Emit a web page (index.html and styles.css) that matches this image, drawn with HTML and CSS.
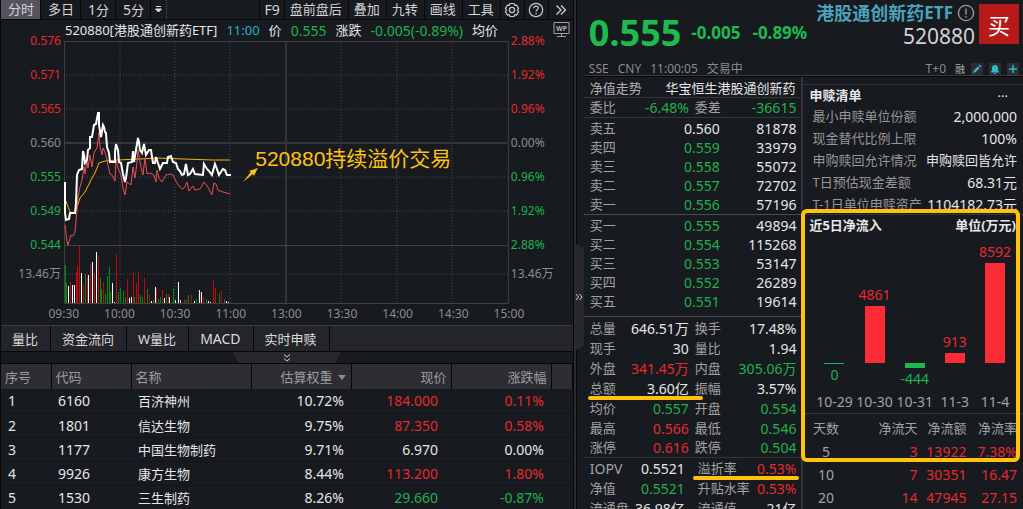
FILE: index.html
```html
<!DOCTYPE html>
<html lang="zh-CN">
<head>
    <meta charset="UTF-8">
    <meta name="viewport" content="width=device-width, initial-scale=1.0">
    <title>520880 港股通创新药ETF</title>
    <link rel="stylesheet" href="styles.css">
</head>
<body>
<div class="terminal">
    <main class="left">
        <nav class="toolbar">
            <button class="tool period active">分时</button>
            <button class="tool period">多日</button>
            <button class="tool period"><span class="num">1</span>分</button>
            <button class="tool period"><span class="num">5</span>分</button>
            <button class="tool-more" aria-label="更多周期">
                <svg width="7" height="7" viewBox="0 0 7 7"><path d="M1 0.500H6M0.500 3H6.500L3.500 6Z" fill="#ddd" stroke="#ddd" stroke-width="1"/></svg>
            </button>
            <span class="spacer"></span>
            <button class="tool f9">F9</button>
            <button class="tool">盘前盘后</button>
            <button class="tool">叠加</button>
            <button class="tool">九转</button>
            <button class="tool">画线</button>
            <button class="tool">工具</button>
            <button class="tool icon" aria-label="设置">
                <svg width="16" height="16" viewBox="0 0 16 16" fill="none" stroke="#c8c8c8" stroke-width="1.2" stroke-linejoin="round">
                    <path d="M6 1.500h4l.7 1.800 1.900-.2 2 3.300L13.400 8l1.200 1.600-2 3.300-1.900-.2L10 14.500H6l-.7-1.800-1.900.2-2-3.300L2.600 8 1.400 6.400l2-3.300 1.900.2Z"/>
                    <circle cx="8" cy="8" r="2.600"/>
                </svg>
            </button>
            <button class="tool icon" aria-label="帮助">
                <svg width="16" height="16" viewBox="0 0 16 16" fill="none" stroke="#c8c8c8" stroke-width="1.200">
                    <circle cx="8" cy="8" r="6.700"/>
                    <path d="M5.800 6.300c0-3 4.500-2.900 4.500-.2 0 1.700-2.200 1.700-2.200 3.500M8.100 10.800v1.400"/>
                </svg>
            </button>
            <button class="tool icon" aria-label="展开">
                <svg width="12" height="12" viewBox="0 0 12 12" fill="none" stroke="#d0d0d0" stroke-width="1.300"><path d="M1.500 1.500 6 6 1.500 10.500M6 1.500 10.500 6 6 10.500"/></svg>
            </button>
        </nav>

        <div class="quote-line">
            <span class="cn">520880[港股通创新药ETF]</span>
            <span class="cn cyan">11:00</span>
            <span class="cn">价</span>
            <span class="down">0.555</span>
            <span class="cn">涨跌</span>
            <span class="down">-0.005(-0.89%)</span>
            <span class="cn">均价</span>
            <svg class="wp" width="17" height="17" viewBox="0 0 17 17">
                <path d="M1 1.500H16V12.500H1ZM8.500 12.500V15M4 15.500H13" fill="none" stroke="#a0a0a0"/>
                <text x="8.500" y="10" text-anchor="middle">WP</text>
            </svg>
        </div>

        <section class="chart">
            <div class="axis axis-left">
                <span class="up">0.576</span>
                <span class="up">0.571</span>
                <span class="up">0.565</span>
                <span>0.560</span>
                <span class="down">0.555</span>
                <span class="down">0.549</span>
                <span class="down">0.544</span>
                <span class="vol">13.46万</span>
            </div>
            <div class="plot">
                <svg viewBox="64 41 445 263" preserveAspectRatio="none">
                    <g class="grid-dots">
                        <path d="M66 75H508M66 109H508M66 177H508M66 211H508M66 274H508"/>
                        <path d="M120 43V303M175 43V303M230 43V303M341 43V303M397 43V303M452 43V303"/>
                    </g>
                    <path class="grid-main" d="M64 143H508M286 41V303"/>
                    <path class="grid-frame" d="M64.500 41.500H508.500V303.500H64.500ZM64 245.500H508"/>
                    <g class="volume" transform="translate(0.5 0)">
                        <path class="v-green" d="M65 303V265M66 303V283M85 303V274M100 303V278M101 303V289M105 303V294M107 303V276M109 303V267M110 303V292M118 303V292M120 303V288M123 303V291M125 303V297M134 303V297M140 303V295M142 303V297M147 303V289M153 303V300M158 303V299M160 303V297M166 303V294M172 303V302M173 303V288M186 303V300M188 303V295M196 303V299M206 303V299M219 303V293M224 303V299"/>
                        <path class="v-red" d="M70 303V282M76 303V272M77 303V266M79 303V246M83 303V285M87 303V277M90 303V264M94 303V273M98 303V257M103 303V282M116 303V254M127 303V279M133 303V273M136 303V283M138 303V272M144 303V278M149 303V295M156 303V289M162 303V290M168 303V294M184 303V299M191 303V295M203 303V297M213 303V280M215 303V288M221 303V291"/>
                        <path class="v-white" d="M68 303V286M72 303V285M74 303V285M81 303V273M88 303V275M92 303V262M96 303V252M112 303V283M114 303V302M129 303V298M131 303V297M151 303V301M155 303V287M164 303V298M169 303V297M175 303V300M178 303V282M180 303V300M194 303V301M199 303V290M201 303V292M208 303V301M210 303V302M226 303V301M228 303V302"/>
                    </g>
                    <polyline class="l-yellow" points="66,201 68,207 71,213 75,213 77,207 80,198 85,192 92,178 95,173 99,163 105,161 117,160 140,159 157,158 183,159 213,160 230,160"/>
                    <polyline class="l-red" points="65,225 66,233 67,242 68,245 71,235 73,236 75,232 77,210 78,197 80,187 82,180 84,167 85,174 87,160 88,168 90,155 92,167 94,153 97,148 99,132 100,147 102,155 103,148 106,155 107,160 110,174 112,175 115,181 116,159 118,168 121,175 123,188 125,195 127,182 131,185 133,167 135,178 137,163 138,150 141,167 143,175 145,158 147,174 150,173 154,175 156,182 157,170 159,178 162,182 166,175 170,174 173,175 177,183 180,187 183,189 185,187 187,182 189,191 193,186 195,190 200,189 204,182 208,187 212,195 214,183 216,184 218,190 223,192 227,193 230,194"/>
                    <polyline class="l-white" points="65,182 65,213 66,220 69,219 70,213 75,213 76,203 77,175 79,170 82,169 83,151 84,155 85,163 87,160 88,150 90,148 90,137 92,137 94,125 96,124 98,113 99,113 99,125 101,137 103,125 104,127 105,132 106,133 107,147 109,153 110,162 115,162 115,152 116,144 118,150 119,162 121,163 123,174 125,182 126,178 128,163 132,162 133,151 134,162 136,150 138,138 139,142 140,150 142,153 144,144 146,155 149,150 151,150 153,163 155,163 156,157 158,163 160,169 163,163 167,163 168,157 171,156 173,162 176,163 178,169 180,171 182,175 184,174 186,164 188,175 190,174 193,169 195,174 203,175 204,164 207,169 209,171 212,175 215,164 217,169 219,175 223,169 225,170 227,175 231,175"/>
                    <path class="arrow" d="M243 182 251 172 249 171 258 168 254 176 253 174Z"/>
                </svg>
                <p class="note">520880持续溢价交易</p>
            </div>
            <div class="axis axis-right">
                <span class="up">2.88%</span>
                <span class="up">1.92%</span>
                <span class="up">0.96%</span>
                <span>0.00%</span>
                <span class="down">0.96%</span>
                <span class="down">1.92%</span>
                <span class="down">2.88%</span>
                <span class="vol">13.46万</span>
            </div>
            <div class="times">
                <span>09:30</span><span>10:00</span><span>10:30</span><span>11:00</span><span>13:00</span><span>13:30</span><span>14:00</span><span>14:30</span><span>15:00</span>
            </div>
        </section>

        <nav class="tabs">
            <button>量比</button>
            <button>资金流向</button>
            <button>W量比</button>
            <button class="latin">MACD</button>
            <button>实时申赎</button>
        </nav>
        <div class="fold">
            <button aria-label="收起">
                <svg width="8" height="8" viewBox="0 0 8 8" fill="none" stroke="#ccc"><path d="M1 .5 4 3 7 .5M1 4.500 4 7 7 4.500"/></svg>
            </button>
        </div>

        <table class="holdings">
            <colgroup><col class="c-no"><col class="c-code"><col class="c-name"><col class="c-val"><col class="c-val"><col class="c-val"><col></colgroup>
            <thead>
                <tr><th>序号</th><th>代码</th><th>名称</th><th class="r">估算权重<i class="sort"></i></th><th class="r">现价</th><th class="r">涨跌幅</th><th></th></tr>
            </thead>
            <tbody>
                <tr><td>1</td><td>6160</td><td class="cn">百济神州</td><td class="r">10.72%</td><td class="r price up">184.000</td><td class="r up">0.11%</td><td></td></tr>
                <tr><td>2</td><td>1801</td><td class="cn">信达生物</td><td class="r">9.75%</td><td class="r price up">87.350</td><td class="r up">0.58%</td><td></td></tr>
                <tr><td>3</td><td>1177</td><td class="cn">中国生物制药</td><td class="r">9.71%</td><td class="r price">6.970</td><td class="r">0.00%</td><td></td></tr>
                <tr><td>4</td><td>9926</td><td class="cn">康方生物</td><td class="r">8.44%</td><td class="r price up">113.200</td><td class="r up">1.80%</td><td></td></tr>
                <tr><td>5</td><td>1530</td><td class="cn">三生制药</td><td class="r">8.26%</td><td class="r price down">29.660</td><td class="r down">-0.87%</td><td></td></tr>
            </tbody>
        </table>
    </main>

    <div class="gutter">
        <button class="handle" aria-label="收起右侧">
            <svg width="8" height="8" viewBox="0 0 8 8" fill="none" stroke="#ccc"><path d="M1 1 3.500 4 1 7M4.500 1 7 4 4.500 7"/></svg>
        </button>
    </div>

    <aside class="right">
        <header class="head">
            <div class="head-main">
                <strong class="last">0.555</strong>
                <strong class="chg">-0.005</strong>
                <strong class="chg">-0.89%</strong>
                <div class="name">
                    <h1>港股通创新药<span>ETF</span>
                        <svg width="18" height="18" viewBox="0 0 18 18" fill="none" stroke="#999" stroke-width="1.400"><circle cx="9" cy="9" r="7.600"/><path d="M9 4.500V10.500M9 12V13.500"/></svg>
                    </h1>
                    <p>520880</p>
                </div>
                <button class="buy">买</button>
            </div>
            <div class="head-sub">
                <span>SSE</span><span>CNY</span><span>11:00:05</span><span>交易中</span>
                <span class="t0">T+0</span><span class="rong">融</span>
                <button aria-label="编辑"><svg width="12" height="12" viewBox="0 0 12 12"><path d="M2 10 2.800 7.500 7 3.300 8.700 5 4.500 9.200ZM7.700 2.600 8.700 1.600 10.400 3.300 9.400 4.300Z" fill="#35b5cc"/></svg></button>
                <button aria-label="提醒"><svg width="12" height="12" viewBox="0 0 12 12"><path d="M2 9.500V8.500L3 7.500V5C3 1 9 1 9 5V7.500L10 8.500V9.500ZM5 10H7V11H5Z" fill="#35b5cc"/></svg></button>
                <button aria-label="添加"><svg width="12" height="12" viewBox="0 0 12 12"><path d="M6 2V10M2 6H10" stroke="#35b5cc" stroke-width="1.500"/></svg></button>
            </div>
        </header>

        <div class="panels">
            <section class="book">
                <div class="nav-row"><a href="#">净值走势</a><span>华宝恒生港股通创新药</span></div>
                <table class="stats ratio">
                    <colgroup><col class="s1"><col class="s2"><col class="s3"><col></colgroup>
                    <tr><th>委比</th><td class="down">-6.48%</td><th>委差</th><td class="down">-36615</td></tr>
                </table>
                <table class="levels asks">
                    <colgroup><col class="l1"><col class="l2"><col></colgroup>
                    <tr><th>卖五</th><td>0.560</td><td>81878</td></tr>
                    <tr><th>卖四</th><td class="down">0.559</td><td>33979</td></tr>
                    <tr><th>卖三</th><td class="down">0.558</td><td>55072</td></tr>
                    <tr><th>卖二</th><td class="down">0.557</td><td>72702</td></tr>
                    <tr><th>卖一</th><td class="down">0.556</td><td>57196</td></tr>
                </table>
                <table class="levels bids">
                    <colgroup><col class="l1"><col class="l2"><col></colgroup>
                    <tr><th>买一</th><td class="down">0.555</td><td>49894</td></tr>
                    <tr><th>买二</th><td class="down">0.554</td><td>115268</td></tr>
                    <tr><th>买三</th><td class="down">0.553</td><td>53147</td></tr>
                    <tr><th>买四</th><td class="down">0.552</td><td>26289</td></tr>
                    <tr><th>买五</th><td class="down">0.551</td><td>19614</td></tr>
                </table>
                <table class="stats day">
                    <colgroup><col class="s1"><col class="s2"><col class="s3"><col></colgroup>
                    <tr><th>总量</th><td>646.51万</td><th>换手</th><td>17.48%</td></tr>
                    <tr><th>现手</th><td>30</td><th>量比</th><td>1.94</td></tr>
                    <tr><th>外盘</th><td class="up">341.45万</td><th>内盘</th><td class="down">305.06万</td></tr>
                    <tr><th class="marked">总额</th><td>3.60亿</td><th>振幅</th><td>3.57%</td></tr>
                    <tr><th>均价</th><td class="down">0.557</td><th>开盘</th><td class="down">0.554</td></tr>
                    <tr><th>最高</th><td class="up">0.566</td><th>最低</th><td class="down">0.546</td></tr>
                    <tr><th>涨停</th><td class="up">0.616</td><th>跌停</th><td class="down">0.504</td></tr>
                </table>
                <table class="stats fund">
                    <colgroup><col class="s1"><col class="s2"><col class="s3"><col></colgroup>
                    <tr><th class="latin">IOPV</th><td>0.5521</td><th class="marked">溢折率</th><td class="up">0.53%</td></tr>
                    <tr><th>净值</th><td class="down">0.5521</td><th>升贴水率</th><td class="up">0.53%</td></tr>
                    <tr><th>流通盘</th><td>36.98亿</td><th>流通值</th><td>21亿</td></tr>
                </table>
            </section>

            <section class="side">
                <div class="side-title"><h2>申赎清单</h2><button aria-label="更多">···</button></div>
                <dl class="list">
                    <div><dt>最小申赎单位份额</dt><dd>2,000,000</dd></div>
                    <div><dt>现金替代比例上限</dt><dd>100%</dd></div>
                    <div><dt>申购赎回允许情况</dt><dd class="cn">申购赎回皆允许</dd></div>
                    <div><dt>T日预估现金差额</dt><dd>68.31元</dd></div>
                    <div><dt>T-1日单位申赎资产</dt><dd>1104182.73元</dd></div>
                </dl>
                <div class="inflow">
                    <div class="inflow-title"><h2>近5日净流入</h2><b>单位(万元)</b></div>
                    <div class="bars">
                        <div class="bar-col neg"><i style="height: 1px"></i><span>0</span><time>10-29</time></div>
                        <div class="bar-col"><span>4861</span><i style="height: 57px"></i><time>10-30</time></div>
                        <div class="bar-col neg"><i style="height: 5px"></i><span>-444</span><time>10-31</time></div>
                        <div class="bar-col"><span>913</span><i style="height: 10px"></i><time>11-3</time></div>
                        <div class="bar-col"><span>8592</span><i style="height: 100px"></i><time>11-4</time></div>
                    </div>
                    <table class="flow">
                        <colgroup><col class="f1"><col class="f2"><col class="f3"><col></colgroup>
                        <tr><th>天数</th><th>净流天</th><th>净流额</th><th>净流率</th></tr>
                        <tr><td>5</td><td>3</td><td>13922</td><td>7.38%</td></tr>
                        <tr><td>10</td><td>7</td><td>30351</td><td>16.47</td></tr>
                        <tr><td>20</td><td>14</td><td>47945</td><td>27.15</td></tr>
                    </table>
                </div>
            </section>
        </div>
    </aside>
</div>
</body>
</html>
```
FILE: styles.css
```css
*, *::before, *::after {
    box-sizing: border-box;
}

body {
    margin: 0;
    background-color: #171a1f;
    color: #e6e6e6;
    font-family: "Noto Sans", "Noto Sans CJK SC", sans-serif;
    font-size: 14px;
    overflow: hidden;
}

h1, h2, p, dl, dd {
    margin: 0;
}

button {
    margin: 0;
    padding: 0;
    border: none;
    background: none;
    color: inherit;
    font-family: inherit;
    font-size: 13px;
    cursor: pointer;
}

svg {
    display: block;
}

table {
    width: 100%;
    border-collapse: collapse;
    table-layout: fixed;
    white-space: nowrap;
}

th, td {
    padding: 0;
    font-weight: normal;
    text-align: left;
}

.up {
    color: #e8282e;
}

.down {
    color: #1fb14c;
}

.cyan {
    color: #22b5cc;
}

.cn {
    font-size: 13px;
}

.num, .latin {
    font-size: 14px;
}

.terminal {
    display: grid;
    grid-template-columns: 30fr 11px 23fr;
    height: 100vh;
    overflow: hidden;
}

.left {
    min-width: 0;
    border-left: 1px solid #08090b;
}

/* toolbar */
.toolbar {
    display: flex;
    height: 20px;
    border-bottom: 1px solid #08090b;
}

.tool {
    padding: 0 6px 0 5px;
    border-right: 1px solid #08090b;
    line-height: 19px;
    color: #d4d4d4;
}

.tool.period {
    padding: 0 6px 0 7px;
}

.tool.active {
    background-color: #55535f;
}

.tool.f9 {
    padding: 0 4px;
    border-left: 1px solid #08090b;
    font-size: 14px;
}

.tool.icon {
    display: flex;
    align-items: center;
    justify-content: center;
    width: 24px;
    padding: 0;
}

.tool.icon:last-child {
    border-right: none;
}

.tool-more {
    display: flex;
    align-items: center;
    padding: 0 4px;
    border-right: 1px dotted #55575c;
}

.spacer {
    flex: 1;
}

.quote-line {
    display: flex;
    gap: 9px;
    height: 21px;
    padding: 0 3px 0 64px;
    line-height: 21px;
    white-space: nowrap;
}

.wp {
    margin: 1px 0 0 auto;
}

.wp text {
    fill: #b0b0b0;
    font-size: 7px;
    font-weight: bold;
}

/* intraday chart */
.chart {
    display: grid;
    grid-template-columns: 63px 1fr 64px;
    grid-template-rows: 263px 21px;
    color: #8d8d8d;
    font-size: 12px;
}

.axis {
    display: flex;
    flex-direction: column;
    margin-top: -17px;
}

.axis span {
    height: 34px;
    line-height: 34px;
}

.axis .vol {
    height: 24px;
    line-height: 24px;
}

.axis-left {
    padding-right: 3px;
    text-align: right;
}

.axis-right {
    padding-left: 2px;
}

.plot {
    position: relative;
}

.plot svg {
    width: 100%;
    height: 263px;
}

.grid-dots {
    stroke: #4a4b50;
    stroke-dasharray: 1 2;
    shape-rendering: crispEdges;
}

.grid-main {
    stroke: #36363a;
    stroke-width: 2;
}

.grid-frame {
    fill: none;
    stroke: #414145;
}

.volume {
    stroke-width: 1;
    shape-rendering: crispEdges;
}

.v-green {
    stroke: #0a8a14;
}

.v-red {
    stroke: #c80a0a;
}

.v-white {
    stroke: #fff;
}

.l-white, .l-red, .l-yellow {
    fill: none;
}

.l-white {
    stroke: #fff;
    stroke-width: 2;
}

.l-red {
    stroke: #e85050;
}

.l-yellow {
    stroke: #f5b40c;
}

.arrow {
    fill: #ffc20e;
}

.note {
    position: absolute;
    left: 43%;
    top: 104px;
    color: #ffc20e;
    font-family: "Liberation Sans", "Noto Sans CJK SC", sans-serif;
    font-size: 21px;
    line-height: 28px;
    white-space: nowrap;
}

.times {
    grid-column: 2;
    display: flex;
    margin: 0 -28px;
    line-height: 19px;
}

.times span {
    flex: 1;
    text-align: center;
}

/* indicator tabs */
.tabs {
    display: flex;
    height: 27px;
    border-top: 1px solid #3c3c40;
    border-bottom: 1px solid #050607;
    background-color: #24242b;
}

.tabs button {
    padding: 0 12px 0 11px;
    border-right: 1px solid #050607;
    color: #dcdcdc;
}

.fold {
    display: flex;
    justify-content: center;
    height: 12px;
    border-bottom: 1px solid #050607;
}

.fold button {
    display: flex;
    align-items: center;
    justify-content: center;
    width: 108px;
    background-color: #28272e;
    clip-path: polygon(0 0, 100% 0, 95% 100%, 5% 100%);
}

/* holdings */
.holdings th {
    height: 25px;
    padding: 0 4px;
    border-right: 1px solid #050607;
    background-color: #2e2d33;
    color: #9c9c9c;
    font-size: 13px;
}

.holdings td {
    height: 24px;
    padding: 0 7px;
    border-bottom: 1px solid #121417;
}

.holdings .r {
    text-align: right;
}

.holdings .price {
    padding-right: 13px;
}

.c-no {
    width: 50px;
}

.c-code {
    width: 80px;
}

.c-name {
    width: 120px;
}

.c-val {
    width: 100px;
}

.sort {
    display: inline-block;
    margin: 0 1px 2px 5px;
    border: 4px solid transparent;
    border-top: 5px solid #8d8d8d;
    border-bottom: none;
}

/* divider between the two halves */
.gutter {
    display: flex;
    align-items: center;
    border-left: 1px solid #050607;
    box-shadow: inset 2px 0 #2c2b31, inset 3px 0 #050607;
    padding-left: 1px;
}

.handle {
    display: flex;
    align-items: center;
    justify-content: center;
    width: 9px;
    height: 108px;
    margin-top: 76px;
    background-color: #29282f;
    clip-path: polygon(0 0, 100% 5%, 100% 95%, 0 100%);
}

/* quote header */
.right {
    min-width: 0;
}

.head {
    height: 77px;
    border-bottom: 1px solid #050607;
    box-shadow: inset 0 -1px #3c3c40;
}

.head-main {
    display: flex;
    height: 60px;
    padding: 3px 4px 0 5px;
}

.last {
    color: #1dba50;
    font-size: 36px;
    line-height: 60px;
}

.chg {
    margin-left: 10px;
    color: #1dba50;
    font-size: 17px;
    line-height: 60px;
}

.chg + .chg {
    margin-left: 12px;
}

.name {
    margin-left: auto;
    text-align: right;
}

.name h1 {
    display: flex;
    align-items: center;
    color: #4aa3bb;
    font-size: 18px;
    line-height: 20px;
    white-space: nowrap;
}

.name h1 span {
    font-size: 17px;
}

.name h1 svg {
    margin-left: 4px;
}

.name p {
    color: #d2d2d2;
    font-size: 21px;
    line-height: 26px;
}

.buy {
    width: 40px;
    height: 40px;
    margin: 1px 0 0 4px;
    background-color: #b81a1c;
    color: #fff;
    font-size: 22px;
}

.head-sub {
    display: flex;
    align-items: center;
    gap: 9px;
    height: 16px;
    padding: 2px 4px 0 5px;
    color: #8c8c8c;
    font-size: 12px;
    line-height: 16px;
}

.t0 {
    margin-left: auto;
}

.rong {
    margin-right: -3px;
    color: #aaa;
    font-size: 10px;
}

.head-sub button {
    width: 12px;
    height: 12px;
    background-color: #2a2e35;
}

.head-sub button + button {
    margin-left: -3px;
}

.panels {
    display: grid;
    grid-template-columns: 1fr 1fr;
}

/* order book */
.book {
    min-width: 0;
    border-right: 2px solid #34333a;
}

.nav-row {
    display: flex;
    justify-content: space-between;
    height: 21px;
    padding: 0 6px;
    border-bottom: 1px solid #34363a;
    font-size: 13px;
    line-height: 22px;
    white-space: nowrap;
}

.nav-row a {
    color: #b0b0b0;
    text-decoration: none;
}

.book th {
    padding-left: 6px;
    color: #a2a2a2;
    font-size: 13px;
}

.book .latin {
    font-size: 14px;
}

.book td {
    text-align: right;
}

.levels tr {
    height: 19px;
    line-height: 19px;
}

.levels td:last-child, .stats td:last-child {
    padding-right: 5px;
}

.levels {
    border-collapse: separate;
    border-spacing: 0;
    border-bottom: 1px solid #4a4c50;
}

.asks {
    padding-top: 1px;
}

.bids {
    padding: 1px 0 5px;
}

.l1 {
    width: 60px;
}

.l2 {
    width: 76px;
}

.stats {
    border-collapse: separate;
    border-spacing: 0;
}

.stats tr {
    height: 20px;
    line-height: 19px;
}

.s1 {
    width: 44px;
}

.s2 {
    width: 61px;
}

.s3 {
    width: 48px;
}

.ratio td, .ratio th, .day tr:last-child > * {
    border-bottom: 1px solid #34363a;
}

.day {
    padding-top: 1px;
}

.fund td:nth-child(2) {
    padding-right: 4px;
}

.fund th:nth-child(3) {
    padding-left: 9px;
}

.marked {
    position: relative;
}

.marked::after {
    content: "";
    position: absolute;
    left: 4px;
    bottom: -2px;
    width: 115px;
    height: 4px;
    border-radius: 2px;
    background-color: #ffc20e;
}

.fund .marked::after {
    width: 106px;
}

/* creation / redemption list */
.side {
    min-width: 0;
    padding-top: 7px;
}

.side h2, .inflow-title b {
    color: #e8e8e8;
    font-size: 13px;
    font-weight: bold;
}

.side-title {
    display: flex;
    justify-content: space-between;
    height: 22px;
    padding: 0 15px 0 6px;
    border-top: 1px solid #34363a;
    line-height: 21px;
}

.list div {
    display: flex;
    justify-content: space-between;
    height: 22px;
    padding: 0 6px 0 9px;
    line-height: 21px;
    white-space: nowrap;
}

.list div:last-child {
    height: 20px;
}

.list dt {
    color: #969696;
    font-size: 13px;
}

/* five day inflow */
.inflow {
    position: relative;
    border-top: 1px solid #34363a;
}

.inflow::after {
    content: "";
    position: absolute;
    top: -6px;
    left: -2px;
    right: 3px;
    height: 253px;
    border: 4px solid #ffc20e;
    border-radius: 6px;
}

.inflow-title {
    display: flex;
    justify-content: space-between;
    padding: 0 7px 0 6px;
    line-height: 20px;
}

.bars {
    display: flex;
    height: 179px;
    padding: 0 8px 0 11px;
    border-bottom: 1px solid #34363a;
}

.bar-col {
    flex: 1;
    display: flex;
    flex-direction: column;
    align-items: center;
    justify-content: flex-end;
    color: #e8282e;
    line-height: 22px;
}

.bar-col i {
    width: 20px;
    background-color: #fb2c36;
}

.bar-col time {
    margin-top: 28px;
    color: #a2a2a2;
}

.bar-col.neg {
    justify-content: flex-start;
    padding-top: 128px;
    color: #1fb14c;
}

.bar-col.neg i {
    background-color: #1fb850;
}

.bar-col.neg time {
    margin-top: auto;
}

.flow th, .flow td {
    height: 23px;
    text-align: right;
    color: #e8282e;
}

.flow th {
    height: 26px;
    color: #a2a2a2;
    font-size: 13px;
}

.flow th:first-child, .flow td:first-child {
    padding-left: 9px;
    color: #a2a2a2;
    text-align: center;
}

.flow th:last-child, .flow td:last-child {
    padding-right: 6px;
}

.f1 {
    width: 36px;
}

.f2 {
    width: 78px;
}

.f3 {
    width: 49px;
}
```
